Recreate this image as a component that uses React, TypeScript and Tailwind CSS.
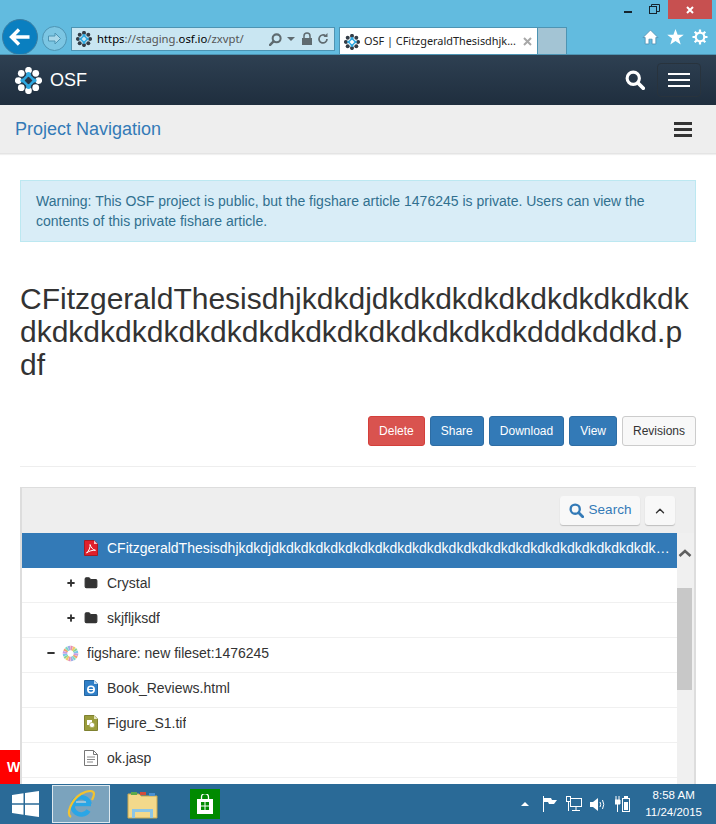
import React from 'react';
import { ChevronUp, Plus, Minus, Folder } from 'lucide-react';

const SANS = 'font-["Liberation_Sans",Arial,sans-serif]';
const UI = 'font-["Noto_Sans",Arial,sans-serif]';

function GlyphSearch({ size, className }: { size: number; className?: string }) {
  return (
    <svg width={size} height={size} viewBox="0 0 16 16" className={className}>
      <circle cx="6.6" cy="6.6" r="4.9" fill="none" stroke="currentColor" strokeWidth="2.5" />
      <path d="M10.4 10.4L14.6 14.6" stroke="currentColor" strokeWidth="3" strokeLinecap="round" />
    </svg>
  );
}

function OsfLogo({ size = 27, dark = false }: { size?: number; dark?: boolean }) {
  const outer = [
    [14, 3.4],
    [21.5, 6.5],
    [24.6, 14],
    [21.5, 21.5],
    [14, 24.6],
    [6.5, 21.5],
    [3.4, 14],
    [6.5, 6.5],
  ];
  const dotColor = dark ? '#333d47' : '#ffffff';
  return (
    <svg width={size} height={size} viewBox="0 0 28 28" className="shrink-0">
      {outer.map(([x, y]) => (
        <circle key={`${x}-${y}`} cx={x} cy={y} r="3.5" fill={dotColor} />
      ))}
      <path d="M14 8L20 14L14 20L8 14Z" fill="none" stroke="#2fa8e0" strokeWidth="2.6" />
      <circle cx="14" cy="7.6" r="2.5" fill="#2fa8e0" />
      <circle cx="14" cy="20.4" r="2.5" fill="#2fa8e0" />
      <circle cx="7.6" cy="14" r="2" fill="#2fa8e0" />
      <circle cx="20.4" cy="14" r="2" fill="#2fa8e0" />
    </svg>
  );
}

function FigshareIcon() {
  const colors = ['#e88fb0', '#f0c86a', '#8fd48f', '#7fc8e8', '#c79be0', '#f0a070', '#80d8c0', '#a0b0e8'];
  return (
    <svg width="17" height="17" viewBox="0 0 18 18">
      {Array.from({ length: 16 }).map((_, i) => (
        <path
          key={i}
          d="M9 .6 L11.6 1.2 L10.2 5.8 L8.8 5.4 Z"
          fill={colors[i % colors.length]}
          transform={`rotate(${i * 22.5} 9 9)`}
        />
      ))}
    </svg>
  );
}

function PdfIcon() {
  return (
    <svg width="14" height="16" viewBox="0 0 14 16">
      <path d="M.5.5H10L13.5 4V15.5H.5Z" fill="#e0202c" stroke="#a81a22" />
      <path d="M10 .5V4H13.5Z" fill="#f8c8c8" />
      <path d="M2.5 13C5 11 6.5 7 6 4.5C7 7.5 9 10 11.5 10.3C8.5 10 5 11 2.5 13Z" fill="none" stroke="#ffffff" strokeWidth="1" />
    </svg>
  );
}

function HtmlFileIcon() {
  return (
    <svg width="14" height="16" viewBox="0 0 14 16">
      <path d="M.5.5H10L13.5 4V15.5H.5Z" fill="#2f7fc8" stroke="#24659f" />
      <path d="M10 .5V4H13.5Z" fill="#cfe2f3" />
      <circle cx="7" cy="9.5" r="3.2" fill="none" stroke="#ffffff" strokeWidth="1.6" />
      <path d="M4 9.5H10" stroke="#ffffff" strokeWidth="1" />
    </svg>
  );
}

function TifFileIcon() {
  return (
    <svg width="14" height="16" viewBox="0 0 14 16">
      <path d="M.5.5H10L13.5 4V15.5H.5Z" fill="#9a9c3c" stroke="#7f8130" />
      <path d="M10 .5V4H13.5Z" fill="#e6e6c0" />
      <rect x="3" y="5" width="5" height="5" fill="#ffffff" />
      <circle cx="8" cy="10" r="2.6" fill="#ffffff" stroke="#9a9c3c" strokeWidth=".6" />
    </svg>
  );
}

function TextFileIcon() {
  return (
    <svg width="14" height="16" viewBox="0 0 14 16">
      <path d="M.5.5H9.5L13.5 4.5V15.5H.5Z" fill="#ffffff" stroke="#777777" />
      <path d="M9.5 .5V4.5H13.5" fill="none" stroke="#777777" />
      <path d="M3 7H11M3 9.5H11M3 12H9" stroke="#888888" />
    </svg>
  );
}

function BrowserBar() {
  return (
    <div className="h-[55px] shrink-0 bg-[#62bbdf] border-b border-[#4d94b3] overflow-hidden">
      {/* window buttons */}
      <div className="h-[19px] flex justify-end items-start pr-1">
        <div className="w-[8px] h-[2px] bg-[#15242e] mt-[11px] mr-[17px]" />
        <svg width="11" height="10" viewBox="0 0 11 10" className="mt-[4px] mr-[8px]">
          <rect x=".5" y="2.5" width="7" height="7" fill="none" stroke="#15242e" />
          <path d="M2.5 2.5V.5H10.5V7.5H7.5" fill="none" stroke="#15242e" />
        </svg>
        <div className="w-[44px] h-[19px] bg-[#c75050] flex items-center justify-center">
          <svg width="8" height="8" viewBox="0 0 8 8">
            <path d="M1 1L7 7M7 1L1 7" stroke="#ffffff" strokeWidth="2" />
          </svg>
        </div>
      </div>
      <div className="flex items-start h-[36px] pl-[2px]">
        <div className="w-[36px] h-[36px] rounded-full bg-[#0a7fc0] border border-[#3a7ea3] flex items-center justify-center shrink-0">
          <svg width="22" height="18" viewBox="0 0 22 18">
            <path d="M10 1.5L2.5 9L10 16.5M3 9H20.5" fill="none" stroke="#ffffff" strokeWidth="3.4" />
          </svg>
        </div>
        <div className="w-[25px] h-[25px] ml-[4px] mt-[7px] rounded-full border border-[#4d94b3] bg-[#7cc6e3] flex items-center justify-center shrink-0">
          <svg width="15" height="13" viewBox="0 0 15 13">
            <path d="M8 1L13.5 6.5L8 12V9H1.5V4H8Z" fill="#a9d8ea" stroke="#4d94b3" />
          </svg>
        </div>
        <div className="w-[264px] h-[24px] ml-[4px] mt-[8px] bg-[#c9e6f2] border border-[#4d94b3] flex items-center pl-[4px] pr-[5px] shrink-0">
          <OsfLogo size={16} dark />
          <span className={`${UI} ml-[5px] text-[11.3px] text-[#555] flex-1 whitespace-nowrap`}>
            <span className="text-black">https</span>://staging.<span className="text-black">osf.io</span>/zxvpt/
          </span>
          <GlyphSearch size={13} className="text-[#5f6b70] -scale-x-100" />
          <div className="ml-[5px] w-0 h-0 border-x-[4px] border-x-transparent border-t-[4px] border-t-[#5f6b70]" />
          <svg width="12" height="14" viewBox="0 0 12 14" className="ml-[6px]">
            <path d="M3 6V4a3 3 0 016 0v2" fill="none" stroke="#5f6b70" strokeWidth="1.5" />
            <rect x="1" y="6" width="10" height="7" fill="#5f6b70" />
          </svg>
          <svg width="12" height="12" viewBox="0 0 12 12" className="ml-[4px]">
            <path d="M10 6a4 4 0 11-1.3-3" fill="none" stroke="#5f6b70" strokeWidth="1.7" />
            <path d="M10.5 0V4H6.5Z" fill="#5f6b70" />
          </svg>
        </div>
        <div className="w-[199px] h-[28px] ml-[4px] mt-[8px] bg-white border border-b-0 border-[#4d94b3] flex items-center pl-[4px] pr-[5px] shrink-0">
          <OsfLogo size={16} dark />
          <span className={`${UI} ml-[4px] text-[10.9px] text-[#222] flex-1 whitespace-nowrap`}>OSF | CFitzgeraldThesisdhjk...</span>
          <svg width="9" height="9" viewBox="0 0 9 9" className="shrink-0">
            <path d="M1 1L8 8M8 1L1 8" stroke="#a8a8a8" strokeWidth="2" />
          </svg>
        </div>
        <div className="w-[29px] h-[28px] mt-[8px] bg-[#a3c4d4] border border-b-0 border-l-0 border-[#4d94b3] shrink-0" />
        <div className="ml-auto flex items-center gap-[8px] mt-[10px] pr-[8px]">
          <svg width="17" height="16" viewBox="0 0 16 15">
            <path d="M8 1L1 8H3V14H6.5V9.5H9.5V14H13V8H15Z" fill="#ffffff" stroke="#3a7ea3" strokeWidth=".6" />
          </svg>
          <svg width="17" height="16" viewBox="0 0 16 15">
            <path d="M8 0L10 5.4H15.8L11.2 8.9L12.9 14.6L8 11.3L3.1 14.6L4.8 8.9L.2 5.4H6Z" fill="#ffffff" />
          </svg>
          <svg width="16" height="16" viewBox="0 0 16 16">
            <circle cx="8" cy="8" r="4.3" fill="none" stroke="#ffffff" strokeWidth="2.2" />
            <path d="M8 0.5V3.5M8 12.5V15.5M.5 8H3.5M12.5 8H15.5M2.7 2.7L4.8 4.8M11.2 11.2L13.3 13.3M13.3 2.7L11.2 4.8M4.8 11.2L2.7 13.3" stroke="#ffffff" strokeWidth="2.2" />
          </svg>
        </div>
      </div>
    </div>
  );
}

function Navbar() {
  return (
    <div className="h-[50px] shrink-0 bg-gradient-to-b from-[#2e4052] to-[#1f2e3e] flex items-center pl-[15px] pr-[15px]">
      <OsfLogo size={27} />
      <span className={`${SANS} ml-[8px] text-[18px] text-white`}>OSF</span>
      <GlyphSearch size={20} className="ml-auto text-white" />
      <div className="ml-[12px] w-[44px] h-[34px] border border-[#28333d] rounded-[4px] flex flex-col items-center justify-center gap-[4px]">
        <span className="w-[22px] h-[2px] bg-white" />
        <span className="w-[22px] h-[2px] bg-white" />
        <span className="w-[22px] h-[2px] bg-white" />
      </div>
    </div>
  );
}

function ActionButton({ label, tone }: { label: string; tone: 'red' | 'blue' | 'plain' }) {
  const toneClass =
    tone === 'red'
      ? 'bg-[#d9534f] border-[#d43f3a] text-white'
      : tone === 'blue'
        ? 'bg-[#337ab7] border-[#2e6da4] text-white'
        : 'bg-[#f8f8f8] border-[#cccccc] text-[#333333]';
  return <button className={`h-[30px] px-[10px] border rounded-[3px] text-[12px] ${toneClass}`}>{label}</button>;
}

interface TreeRowProps {
  label: string;
  icon: React.ReactNode;
  indent: number;
  iconWidth?: number;
  toggle?: 'plus' | 'minus';
  selected?: boolean;
}

function TreeRow({ label, icon, indent, iconWidth = 23, toggle, selected }: TreeRowProps) {
  return (
    <div
      className={`h-[35px] shrink-0 flex items-center pb-[4px] pr-[7px] border-b ${
        selected ? 'bg-[#337ab7] border-[#337ab7] text-white' : 'border-[#f0f0f0] text-[#333333]'
      }`}
    >
      <div className="shrink-0 flex items-center justify-end" style={{ width: indent }}>
        {toggle === 'plus' && <Plus className="w-[10px] h-[10px] mr-[8px] text-[#333]" strokeWidth={4.5} />}
        {toggle === 'minus' && <Minus className="w-[10px] h-[10px] mr-[6px] text-[#333]" strokeWidth={4.5} />}
      </div>
      <div className="shrink-0 flex items-center" style={{ width: iconWidth }}>{icon}</div>
      <span className="text-[14px] truncate min-w-0">{label}</span>
    </div>
  );
}

function FileBrowser() {
  return (
    <div className="border-l-2 border-r-2 border-t border-[#dddddd] bg-[#eeeeee] h-[320px] flex flex-col">
      <div className="h-[45px] shrink-0 flex items-center justify-end pr-[19px] gap-[5px]">
        <button className="h-[29px] w-[80px] bg-[#f8f8f8] rounded-[3px] shadow-[0_1px_1px_rgba(0,0,0,.2)] flex items-center justify-center gap-[5px] text-[13.5px] text-[#337ab7]">
          <GlyphSearch size={15} />
          Search
        </button>
        <button className="h-[29px] w-[30px] bg-[#f8f8f8] rounded-[3px] shadow-[0_1px_1px_rgba(0,0,0,.2)] flex items-center justify-center text-[#333]">
          <ChevronUp className="w-[14px] h-[14px]" strokeWidth={2.4} />
        </button>
      </div>
      <div className="flex flex-1 min-h-0">
        <div className="w-[655px] bg-white flex flex-col overflow-hidden">
          <TreeRow selected indent={62} icon={<PdfIcon />} label="CFitzgeraldThesisdhjkdkdjdkdkdkdkdkdkdkdkdkdkdkdkdkdkdkdkdkdkdkdkdkdkdkdkdkdkdkdddkddkd.pdf" />
          <TreeRow indent={62} toggle="plus" icon={<Folder className="w-[14px] h-[14px] text-[#333] fill-[#333]" />} label="Crystal" />
          <TreeRow indent={62} toggle="plus" icon={<Folder className="w-[14px] h-[14px] text-[#333] fill-[#333]" />} label="skjfljksdf" />
          <TreeRow indent={40} iconWidth={25} toggle="minus" icon={<FigshareIcon />} label="figshare: new fileset:1476245" />
          <TreeRow indent={62} icon={<HtmlFileIcon />} label="Book_Reviews.html" />
          <TreeRow indent={62} icon={<TifFileIcon />} label="Figure_S1.tif" />
          <TreeRow indent={62} icon={<TextFileIcon />} label="ok.jasp" />
        </div>
        <div className="w-[17px] shrink-0 bg-[#f0f0f0] pt-[15px] flex flex-col">
          <svg width="16" height="10" viewBox="0 0 16 10" className="shrink-0">
            <path d="M2.5 8L8 3L13.5 8" fill="none" stroke="#606060" strokeWidth="2.6" />
          </svg>
          <div className="w-[15px] h-[102px] mt-[30px] bg-[#c8c8c8]" />
        </div>
      </div>
    </div>
  );
}

function Taskbar() {
  return (
    <div className="h-[40px] shrink-0 bg-[#2a6a97] flex items-center">
      <svg width="27" height="26" viewBox="0 0 27 26" className="ml-[12px] shrink-0">
        <path d="M0 4L11.5 2.3V12.3H0ZM13 2L27 0V12.3H13ZM0 13.7H11.5V23.7L0 22ZM13 13.7H27V26L13 24Z" fill="#ffffff" />
      </svg>
      <div className="ml-[13px] w-[58px] h-[38px] bg-[#7ba3bd] border border-[#dce8ef] flex items-center justify-center shrink-0">
        <svg width="30" height="30" viewBox="0 0 30 30">
          <path d="M22.5 21.5A8.6 8.6 0 1 1 23.6 15" fill="none" stroke="#2aa6e6" strokeWidth="4.6" />
          <path d="M8 15.5H25" stroke="#2aa6e6" strokeWidth="3.4" />
          <path d="M10 13H20" stroke="#bfe6f7" strokeWidth="1" />
          <path d="M5 28C0 25 5 11 15 5C22 1 28 1 28 5C28 7 27 9 26 11" fill="none" stroke="#f2c230" strokeWidth="2.2" />
        </svg>
      </div>
      <div className="ml-[17px] w-[32px] shrink-0">
        <svg width="32" height="30" viewBox="0 0 32 30">
          <path d="M1 5H12L14 7H30V29H1Z" fill="#f3d98b" stroke="#c9a850" />
          <rect x="4" y="3" width="6" height="3" fill="#5caa4a" />
          <rect x="13" y="3" width="6" height="3" fill="#d24b3b" />
          <rect x="22" y="4" width="6" height="3" fill="#4a90d0" />
          <path d="M5 29V20H26V29H23V23H8V29Z" fill="#8cc6e6" />
        </svg>
      </div>
      <div className="ml-[31px] w-[30px] h-[30px] bg-[#008a00] flex items-center justify-center shrink-0">
        <svg width="18" height="21" viewBox="0 0 18 21">
          <path d="M5.5 5V3a3.5 3.5 0 017 0v2" fill="none" stroke="#ffffff" strokeWidth="1.3" />
          <path d="M1 5H17V20H1Z" fill="#ffffff" />
          <path d="M5 8H8.5V11.5H5ZM9.5 8H13V11.5H9.5ZM5 12.5H8.5V16H5ZM9.5 12.5H13V16H9.5Z" fill="#008a00" />
        </svg>
      </div>
      <div className="ml-auto flex items-center pr-[14px]">
        <div className="w-0 h-0 border-x-[4px] border-x-transparent border-b-[4px] border-b-white mr-[13px]" />
        <svg width="16" height="16" viewBox="0 0 16 16" className="mr-[8px]">
          <path d="M1.5 0V16" stroke="#ffffff" />
          <path d="M2 2H9L10 4H15L12 8H7L6 6H2Z" fill="#ffffff" />
        </svg>
        <svg width="16" height="16" viewBox="0 0 16 16" className="mr-[8px]">
          <rect x="4.5" y="2.5" width="11" height="8" fill="none" stroke="#ffffff" />
          <rect x=".5" y=".5" width="4" height="5" fill="#2a6a97" stroke="#ffffff" />
          <path d="M2.5 5.5V15M10 10.5V14M6 14.5H14" stroke="#ffffff" />
        </svg>
        <svg width="16" height="15" viewBox="0 0 16 15" className="mr-[9px]">
          <path d="M0 5H3L8 1V14L3 10H0Z" fill="#ffffff" />
          <path d="M10 5Q11.5 7.5 10 10M12.5 3Q15 7.5 12.5 12" fill="none" stroke="#ffffff" />
        </svg>
        <svg width="15" height="16" viewBox="0 0 15 16" className="mr-[15px]">
          <path d="M1 0V4M4 0V4M0 4H5V8H0ZM2.5 8V16" stroke="#ffffff" fill="#ffffff" />
          <rect x="7.5" y="2.5" width="7" height="13" fill="none" stroke="#ffffff" />
          <rect x="9" y="0" width="4" height="2" fill="#ffffff" />
          <rect x="9" y="6" width="4" height="8" fill="#ffffff" />
        </svg>
        <div className={`${SANS} text-[11.5px] leading-[17px] text-white text-center`}>
          <div>8:58 AM</div>
          <div>11/24/2015</div>
        </div>
      </div>
    </div>
  );
}

export default function App() {
  return (
    <div className={`${SANS} w-[716px] h-[824px] flex flex-col overflow-hidden bg-white`}>
      <BrowserBar />
      <Navbar />
      <div className="relative flex-1 min-h-0 overflow-hidden">
        {/* feedback tab stuck to the window edge */}
        <div className="absolute left-0 bottom-0 w-[20px] h-[34px] bg-[#ff0000] overflow-hidden pl-[7px] text-[14px] leading-[34px] font-bold text-white">
          W
        </div>

        <div className="h-[49px] bg-[#eeeeee] border-b border-[#e4e4e4] shadow-[0_1px_1px_rgba(0,0,0,.06)] flex items-center justify-between pl-[15px] pr-[24px]">
          <span className="text-[18px] text-[#337ab7]">Project Navigation</span>
          <div className="flex flex-col gap-[3px]">
            <span className="w-[18px] h-[3px] bg-[#333]" />
            <span className="w-[18px] h-[3px] bg-[#333]" />
            <span className="w-[18px] h-[3px] bg-[#333]" />
          </div>
        </div>

        <div className="px-[20px] pt-[26px]">
          <div className="h-[62px] bg-[#d9edf7] border border-[#bce8f1] pl-[15px] pr-[15px] py-[10px] text-[14px] leading-[20px] text-[#31708f]">
            Warning: This OSF project is public, but the figshare article 1476245 is private. Users can view the contents of this private fishare article.
          </div>

          <h2 className="mt-[40px] text-[30px] leading-[33px] text-[#333333] break-all">
            CFitzgeraldThesisdhjkdkdjdkdkdkdkdkdkdkdkdkdkdkdkdkdkdkdkdkdkdkdkdkdkdkdkdkdkdddkddkd.pdf
          </h2>

          <div className="mt-[35px] flex justify-end gap-[5px]">
            <ActionButton label="Delete" tone="red" />
            <ActionButton label="Share" tone="blue" />
            <ActionButton label="Download" tone="blue" />
            <ActionButton label="View" tone="blue" />
            <ActionButton label="Revisions" tone="plain" />
          </div>

          <hr className="mt-[20px] mb-[20px] border-[#eeeeee]" />

          <FileBrowser />
        </div>
      </div>
      <Taskbar />
    </div>
  );
}
